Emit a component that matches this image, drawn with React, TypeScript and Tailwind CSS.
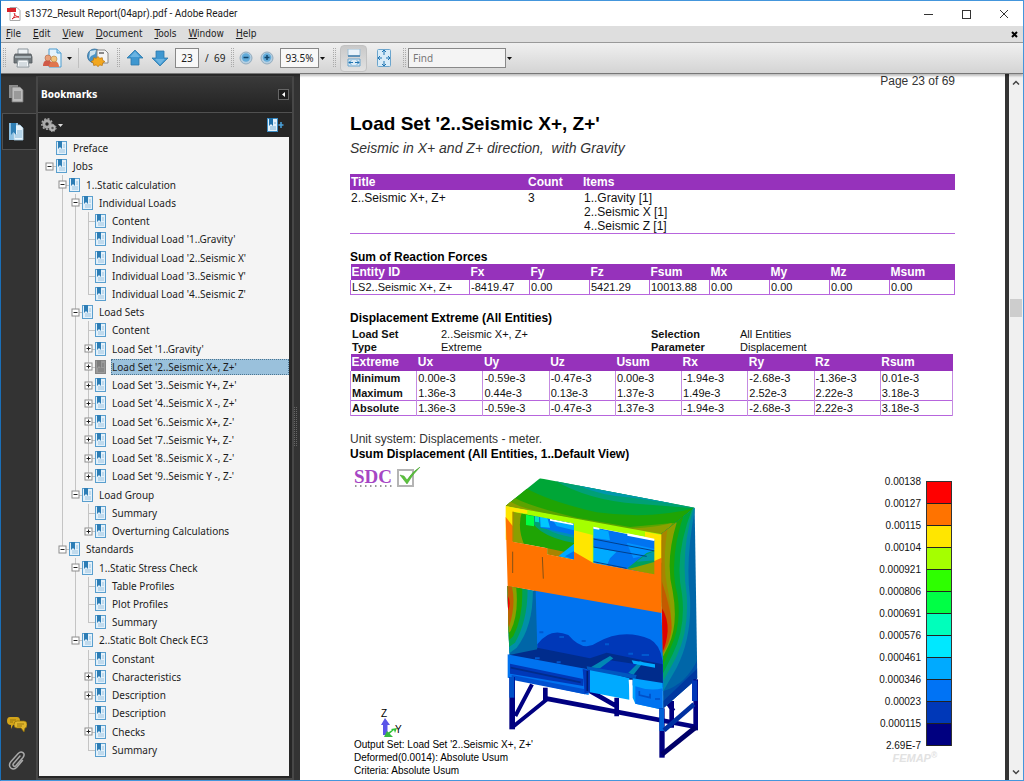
import type { ReactNode } from 'react'
import clsx from 'clsx'

type Bookmark = { level: number; label: string; toggle?: '+' | '-'; selected?: boolean }

const bookmarks: Bookmark[] = [
  { level: 0, label: 'Preface' },
  { level: 0, label: 'Jobs', toggle: '-' },
  { level: 1, label: '1..Static calculation', toggle: '-' },
  { level: 2, label: 'Individual Loads', toggle: '-' },
  { level: 3, label: 'Content' },
  { level: 3, label: "Individual Load '1..Gravity'" },
  { level: 3, label: "Individual Load '2..Seismic X'" },
  { level: 3, label: "Individual Load '3..Seismic Y'" },
  { level: 3, label: "Individual Load '4..Seismic Z'" },
  { level: 2, label: 'Load Sets', toggle: '-' },
  { level: 3, label: 'Content' },
  { level: 3, label: "Load Set '1..Gravity'", toggle: '+' },
  { level: 3, label: "Load Set '2..Seismic X+, Z+'", toggle: '+', selected: true },
  { level: 3, label: "Load Set '3..Seismic Y+, Z+'", toggle: '+' },
  { level: 3, label: "Load Set '4..Seismic X -, Z+'", toggle: '+' },
  { level: 3, label: "Load Set '6..Seismic X+, Z-'", toggle: '+' },
  { level: 3, label: "Load Set '7..Seismic Y+, Z-'", toggle: '+' },
  { level: 3, label: "Load Set '8..Seismic X -, Z-'", toggle: '+' },
  { level: 3, label: "Load Set '9..Seismic Y -, Z-'", toggle: '+' },
  { level: 2, label: 'Load Group', toggle: '-' },
  { level: 3, label: 'Summary' },
  { level: 3, label: 'Overturning Calculations', toggle: '+' },
  { level: 1, label: 'Standards', toggle: '-' },
  { level: 2, label: '1..Static Stress Check', toggle: '-' },
  { level: 3, label: 'Table Profiles' },
  { level: 3, label: 'Plot Profiles' },
  { level: 3, label: 'Summary' },
  { level: 2, label: '2..Static Bolt Check EC3', toggle: '-' },
  { level: 3, label: 'Constant' },
  { level: 3, label: 'Characteristics', toggle: '+' },
  { level: 3, label: 'Description', toggle: '+' },
  { level: 3, label: 'Description' },
  { level: 3, label: 'Checks', toggle: '+' },
  { level: 3, label: 'Summary' },
]

const menus = ['File', 'Edit', 'View', 'Document', 'Tools', 'Window', 'Help']

const forces = {
  head: ['Entity ID', 'Fx', 'Fy', 'Fz', 'Fsum', 'Mx', 'My', 'Mz', 'Msum'],
  row: ['LS2..Seismic X+, Z+', '-8419.47', '0.00', '5421.29', '10013.88', '0.00', '0.00', '0.00', '0.00'],
}

const extremes = {
  head: ['Extreme', 'Ux', 'Uy', 'Uz', 'Usum', 'Rx', 'Ry', 'Rz', 'Rsum'],
  rows: [
    ['Minimum', '0.00e-3', '-0.59e-3', '-0.47e-3', '0.00e-3', '-1.94e-3', '-2.68e-3', '-1.36e-3', '0.01e-3'],
    ['Maximum', '1.36e-3', '0.44e-3', '0.13e-3', '1.37e-3', '1.49e-3', '2.52e-3', '2.22e-3', '3.18e-3'],
    ['Absolute', '1.36e-3', '-0.59e-3', '-0.47e-3', '1.37e-3', '-1.94e-3', '-2.68e-3', '2.22e-3', '3.18e-3'],
  ],
}

const scaleLabels = [
  '0.00138', '0.00127', '0.00115', '0.00104', '0.000921', '0.000806', '0.000691',
  '0.000576', '0.000461', '0.000346', '0.00023', '0.000115', '2.69E-7',
]

const scaleColors = [
  'bg-[#ff0000]', 'bg-[#ff7300]', 'bg-[#ffe600]', 'bg-[#a5ff00]', 'bg-[#2eff00]', 'bg-[#00ff45]',
  'bg-[#00ffbb]', 'bg-[#00e8ff]', 'bg-[#00aaff]', 'bg-[#0073f5]', 'bg-[#0038b8]', 'bg-[#000080]',
]

// does the guide line in column k go on below row i?
function continues(i: number, k: number) {
  for (let j = i + 1; j < bookmarks.length; j++) {
    if (bookmarks[j].level < k) return false
    if (bookmarks[j].level === k) return true
  }
  return false
}

function BookmarkIcon({ gray }: { gray?: boolean }) {
  const c = gray ? '#7d7d7d' : '#2d7db5'
  return (
    <svg viewBox="0 0 11 14" className="relative w-[11px] h-[14px] shrink-0">
      <rect x="0.5" y="0.5" width="10" height="13" fill={gray ? '#9a9a9a' : '#e4f1fa'} stroke={gray ? '#858585' : '#5a9fce'} />
      <path d="M2 0h4v8L4 6 2 8z" fill={c} />
      <path d="M7 4h2M7 6h2M3 9h6M3 11h6" stroke={gray ? '#777' : '#9cc4e0'} />
    </svg>
  )
}

function TreeRow({ item, index }: { item: Bookmark; index: number }) {
  const cols = Array.from({ length: item.level + 1 }, (_, k) => k)
  return (
    <li className="flex-1 flex items-stretch min-h-[17px]" role="treeitem" aria-level={item.level + 1} aria-selected={!!item.selected}>
      {cols.map((k) => {
        const own = k === item.level
        const down = k > 0 && continues(index, k)
        return (
          <span key={k} className="w-[13px] flex flex-col items-center relative">
            <span className={clsx('flex-1 w-px', (down || (own && k > 0)) && 'bg-[#c4c4c4]')} />
            <span className={clsx('flex-1 w-px', down && 'bg-[#c4c4c4]')} />
            {own && (k > 0 || item.toggle) && <span className="absolute left-[6px] right-0 top-1/2 h-px bg-[#c4c4c4]" />}
            {own && item.toggle && (
              <button aria-label="Toggle" className="absolute inset-0 flex items-center justify-center">
                <svg viewBox="0 0 9 9" className="w-[9px] h-[9px]">
                  <rect x="1" y="1" width="7" height="7" fill="#fff" stroke="#8c8c8c" />
                  <path d={item.toggle === '+' ? 'M2.5 4.5h4M4.5 2.5v4' : 'M2.5 4.5h4'} stroke="#222" />
                </svg>
              </button>
            )}
          </span>
        )
      })}
      <span className="flex items-center"><BookmarkIcon gray={item.selected} /></span>
      <a
        href="#"
        className={clsx(
          'ml-[5px] my-px flex-1 flex items-center border whitespace-nowrap',
          item.selected ? 'bg-[#9ac1dc] border-dotted border-[#4d7590]' : 'border-transparent'
        )}
      >
        {item.label}
      </a>
    </li>
  )
}

function Grip() {
  return (
    <svg viewBox="0 0 3 20" className="w-[3px] h-5 shrink-0">
      <path d="M0.5 0v20M2.5 0v20" stroke="#aaa" strokeDasharray="1 1" />
    </svg>
  )
}

function Caret({ className }: { className?: string }) {
  return (
    <button aria-label="More" className={clsx('w-[7px] h-4 flex items-center', className)}>
      <svg viewBox="0 0 5 3" className="w-[5px] h-[3px]"><path d="M0 0h5L2.5 3z" fill="#111" /></svg>
    </button>
  )
}

function ToolButton({ label, className, children }: { label: string; className?: string; children: ReactNode }) {
  return (
    <button aria-label={label} className={clsx('flex items-center justify-center shrink-0', className)}>
      {children}
    </button>
  )
}

function ArrowIcon({ down }: { down?: boolean }) {
  return (
    <svg viewBox="0 0 18 18" className={clsx('w-[18px] h-[18px]', down && 'rotate-180')}>
      <path d="M9 1l8 8h-4v7H5V9H1z" fill="#3f97d0" stroke="#2d78ab" strokeWidth="0.8" strokeLinejoin="round" />
      <path d="M9 2.5l5 5.5H4z" fill="#6bb4e2" />
    </svg>
  )
}

function ZoomIcon({ plus }: { plus?: boolean }) {
  return (
    <svg viewBox="0 0 14 14" className="w-[14px] h-[14px]">
      <circle cx="7" cy="7" r="6" fill="#b5cfe2" stroke="#94acbd" />
      <circle cx="7" cy="6.5" r="4.2" fill="#62abd9" />
      <path d={plus ? 'M4.5 6.5h5M7 4v5' : 'M4.5 6.5h5'} stroke="#12456b" strokeWidth="1.5" />
    </svg>
  )
}

function Toolbar() {
  return (
    <div className="relative z-10 h-8 shrink-0 flex items-center pl-[2px] bg-linear-to-b from-[#f0f0f0] to-[#d4d4d4] border-t border-t-[#999] border-b border-b-[#777] shadow-[0_2px_2px_rgba(0,0,0,0.25)]">
      <Grip />
      <ToolButton label="Print" className="ml-[7px] w-[20px]">
        <svg viewBox="0 0 20 20" className="w-5 h-5">
          <path d="M5 1h10v6H5z" fill="#eef3f6" stroke="#8c969c" />
          <path d="M2 6h16l1 3v6H1V9z" fill="#70777b" stroke="#50575b" strokeWidth="0.8" />
          <path d="M2 8h16v2H2z" fill="#a9b3b8" />
          <path d="M5 12h10l1 7H4z" fill="#f5f8fa" stroke="#8c969c" />
          <path d="M6 15h8M6 17h8" stroke="#b5c0c7" />
        </svg>
      </ToolButton>
      <ToolButton label="Collaborate" className="ml-[10px] w-[20px]">
        <svg viewBox="0 0 20 20" className="w-5 h-5">
          <path d="M6 1h8l4 4v14H6z" fill="#e6f3fc" stroke="#4d9ccf" />
          <path d="M14 1v4h4" fill="#bfdcef" stroke="#4d9ccf" />
          <path d="M0 18c0-8 9-8 9 0z" fill="#d05a48" />
          <circle cx="5" cy="10" r="3" fill="#e8a07a" stroke="#b0623f" strokeWidth="0.6" />
          <path d="M6 19c0-8 10-8 10 0z" fill="#e0764f" />
          <circle cx="11" cy="11" r="3" fill="#f3c37c" stroke="#b0823f" strokeWidth="0.6" />
        </svg>
      </ToolButton>
      <Caret className="ml-1" />
      <div className="ml-1 w-px h-5 bg-[#c0c0c0]" />
      <ToolButton label="Online services" className="ml-2 w-[22px]">
        <svg viewBox="0 0 22 21" className="w-[22px] h-[21px]">
          <circle cx="7.5" cy="8" r="7" fill="#4a93c6" stroke="#376f98" strokeWidth="0.8" />
          <path d="M3 3l6-1-1 4-4 2-2 3z" fill="#cfe3ee" />
          <path d="M10 2h8l3 3v10H10z" fill="#f4f4f4" stroke="#888" />
          <path d="M12 5h5" stroke="#666" strokeWidth="1.5" />
          <path d="M11 8.500l1.700 1.800 2.600-.6.4 2.600 2.300 1.300-2.300 1.300-.4 2.600-2.600-.6L11 18.700l-1.700-1.800-2.600.6-.4-2.600L4 13.600l2.300-1.300.4-2.600 2.600.6z" fill="#f2a71f" stroke="#b87410" strokeWidth="0.7" />
        </svg>
      </ToolButton>
      <div className="ml-2"><Grip /></div>
      <ToolButton label="Previous page" className="ml-[6px] w-[18px]"><ArrowIcon /></ToolButton>
      <ToolButton label="Next page" className="ml-[7px] w-[18px]"><ArrowIcon down /></ToolButton>
      <input aria-label="Page" defaultValue="23" className="ml-[6px] w-6 h-5 bg-[#f8f8f8] border border-[#888] text-center outline-none" />
      <span className="ml-[6px] w-[22px] whitespace-nowrap">/ &nbsp;69</span>
      <div className="ml-1"><Grip /></div>
      <ToolButton label="Zoom out" className="ml-[5px] w-[14px]"><ZoomIcon /></ToolButton>
      <ToolButton label="Zoom in" className="ml-[7px] w-[14px]"><ZoomIcon plus /></ToolButton>
      <input aria-label="Zoom" defaultValue="93.5%" className="ml-[6px] w-[39px] h-5 bg-[#f8f8f8] border border-[#888] text-center outline-none" />
      <Caret className="ml-[1px]" />
      <div className="ml-[6px]"><Grip /></div>
      <ToolButton label="Fit width" className="ml-[4px] w-[27px] h-[27px] rounded-sm bg-linear-to-b from-[#c9c9c9] to-[#e2e2e2] border border-[#c2c2c2]">
        <svg viewBox="0 0 14 18" className="w-[14px] h-[18px]">
          <path d="M1 0h12v7H1z" fill="#e9f3fa" stroke="#9fbfd5" />
          <path d="M1 7h12" stroke="#3f7dab" strokeWidth="1.5" />
          <path d="M1 10h12v7H1z" fill="#dcecf7" stroke="#6ba5cd" />
          <path d="M2 13.5h4M8 13.5h4M4 11.5l-2 2 2 2M10 11.5l2 2-2 2" stroke="#1f74b2" fill="none" />
        </svg>
      </ToolButton>
      <ToolButton label="Fit page" className="ml-[9px] w-[16px]">
        <svg viewBox="0 0 14 18" className="w-[14px] h-[18px]">
          <rect x="0.5" y="0.5" width="13" height="17" rx="1" fill="#d9ecf8" stroke="#6ba5cd" />
          <path d="M7 1v5M7 12v5M1 9h4M9 9h4M5 3l2-2 2 2M5 15l2 2 2-2M3 7L1 9l2 2M11 7l2 2-2 2" stroke="#1f74b2" fill="none" />
        </svg>
      </ToolButton>
      <div className="ml-[11px]"><Grip /></div>
      <input aria-label="Find" placeholder="Find" className="ml-[2px] w-[98px] h-5 pl-1 bg-[#f4f4f4] border border-[#888] placeholder-[#777] outline-none" />
      <Caret className="ml-[1px]" />
    </div>
  )
}

function Sidebar() {
  return (
    <aside className="flex bg-[#333] shrink-0">
      <nav className="w-[35px] flex flex-col">
        <button aria-label="Pages" className="h-[39px] flex items-center justify-center pr-[5px]">
          <svg viewBox="0 0 16 19" className="w-4 h-[19px]">
            <path d="M1 1h9v13H1z" fill="#8d8d8d" />
            <path d="M4 3h8l3 3v12H4z" fill="#bcbcbc" stroke="#777" strokeWidth="0.8" />
            <path d="M6 8h7M6 10h7M6 12h7M6 14h7" stroke="#777" />
          </svg>
        </button>
        <button aria-label="Bookmarks" className="h-[37px] ml-px flex items-center justify-center bg-[#262626] border border-r-0 border-[#505050] pr-[7px]">
          <svg viewBox="0 0 16 19" className="w-4 h-[19px]">
            <path d="M1 1h9v17H1z" fill="#8fc1e2" />
            <path d="M6 3h6l3 3v12H6z" fill="#e8f4fc" stroke="#a6cbe2" strokeWidth="0.8" />
            <path d="M3 1h5v12l-2.500-3L3 13z" fill="#2f7fb5" />
            <path d="M9 9h5M9 11h5M7 13h7M7 15h7" stroke="#7fb2d4" />
          </svg>
        </button>
        <div className="flex-1" />
        <button aria-label="Comments" className="h-8 flex items-center justify-center pr-[4px]">
          <svg viewBox="0 0 20 15" className="w-5 h-[15px]">
            <path d="M3 0h7q3 0 3 4t-3 4H6l-2 4V8Q0 8 0 4t3-4z" fill="#d3a419" />
            <path d="M10 4h7q3 0 3 3.500T18 11l-1 4-3-4h-4q-3 0-3-3.500T10 4z" fill="#dfb52c" stroke="#8a6a08" strokeWidth="0.7" />
            <path d="M3 3h6M3 5h3M10 7h7M10 9h5" stroke="#8a6a08" strokeWidth="0.8" />
          </svg>
        </button>
        <button aria-label="Attachments" className="h-10 flex items-center justify-center pr-[4px]">
          <svg viewBox="0 0 18 20" className="w-[18px] h-5" fill="none" stroke="#a9a9a9" strokeWidth="1.5" strokeLinecap="round">
            <path d="M12 6l-6.500 7.500c-1.500 2 .8 3.800 2.300 2.200L15 7.500c3-4-1.500-7.500-4.800-4L3 11.500c-4.500 5.500 2 10 6 5.500l5.500-6.500" />
          </svg>
        </button>
      </nav>
      <section className="w-[258px] flex flex-col border-2 border-t border-[#474747] bg-[#262626] mt-[2px]">
        <header className="h-[36px] shrink-0 flex items-center justify-between pl-[3px] pr-[3px] bg-linear-to-b from-[#3a3a3a] to-[#222] border-b border-[#505050]">
          <h2 className="font-bold text-white font-['DejaVu_Sans_Condensed','DejaVu_Sans',sans-serif]">Bookmarks</h2>
          <button aria-label="Collapse" className="w-[11px] h-[11px] border border-[#666] bg-[#1e1e1e] flex items-center justify-center">
            <svg viewBox="0 0 3 5" className="w-[3px] h-[5px]"><path d="M3 0v5L0 2.500z" fill="#fff" /></svg>
          </button>
        </header>
        <div className="h-[24px] shrink-0 flex items-center justify-between pl-[3px] pr-[8px]">
          <button aria-label="Options" className="flex items-center">
            <svg viewBox="0 0 22 15" className="w-[22px] h-[15px]">
              <circle cx="6" cy="6" r="3.2" fill="none" stroke="#a8a8a8" strokeWidth="3" />
              <circle cx="6" cy="6" r="5.2" fill="none" stroke="#a8a8a8" strokeWidth="1.5" strokeDasharray="2 1.5" />
              <circle cx="11.5" cy="10" r="2.2" fill="#555" stroke="#b4b4b4" strokeWidth="2" />
              <circle cx="11.5" cy="10" r="3.6" fill="none" stroke="#b4b4b4" strokeWidth="1" strokeDasharray="1.5 1.3" />
              <path d="M17 6h5l-2.500 3z" fill="#ddd" />
            </svg>
          </button>
          <button aria-label="New bookmark">
            <svg viewBox="0 0 17 14" className="w-[17px] h-[14px]">
              <rect x="0.5" y="0.5" width="10" height="13" fill="#e4f1fa" stroke="#3b8cc4" />
              <path d="M2 0h4v8L4 6 2 8z" fill="#1d6ea8" />
              <path d="M7 5h2M3 9h6M3 11h6" stroke="#7fb2d4" />
              <path d="M14 4v6M11.500 7h5" stroke="#4aa3dd" strokeWidth="1.5" />
            </svg>
          </button>
        </div>
        <ul role="tree" className="flex-1 min-h-0 flex flex-col ml-px mr-[3px] mb-[2px] pl-1 pt-[2px] pb-[17px] bg-[#f4f4f4] overflow-hidden">
          {bookmarks.map((b, i) => <TreeRow key={i} item={b} index={i} />)}
        </ul>
      </section>
      <div className="w-[6px] flex items-center">
        {/* splitter handle */}
        <svg viewBox="0 0 3 40" className="w-[3px] h-10"><path d="M0.5 0v40M2.5 0v40" stroke="#666" strokeDasharray="1 1" /></svg>
      </div>
    </aside>
  )
}

function SdcLogo() {
  return (
    <svg viewBox="0 0 68 22" className="w-[68px] h-[22px]">
      <text x="0" y="16" fontFamily="Liberation Serif, serif" fontSize="19" fontWeight="bold" fill="#a646c4">SDC</text>
      <path d="M1 19h38" stroke="#777" strokeWidth="1.5" strokeDasharray="1.5 3.5" />
      <rect x="44" y="3" width="15" height="16" fill="#fff" stroke="#b4b4b4" strokeWidth="2" />
      <path d="M46 8l4 1 3 4q5-8 13-13-8 8-13 17z" fill="#5cc43c" stroke="#3f9a28" strokeWidth="0.5" />
    </svg>
  )
}

function Triad() {
  return (
    <svg viewBox="0 0 28 30" className="w-7 h-[30px]">
      <text x="2" y="9" fontFamily="Liberation Sans, sans-serif" fontSize="10" fill="#000">Z</text>
      <path d="M6 10l5 7H8.500v10H4V17H2z" fill="#5b55e8" />
      <path d="M8 28l7-6 1 3 2-5-6 1 1 1-6 4z" fill="#2fc437" />
      <path d="M8 23l6 6H5z" fill="#38b840" />
      <text x="16" y="25" fontFamily="Liberation Sans, sans-serif" fontSize="10" fill="#000">Y</text>
    </svg>
  )
}

// contour plot of the cabinet on its support frame
function Model() {
  return (
    <svg viewBox="0 0 660 870" className="w-[220px] h-[290px] shrink-0">
      <defs>
        <clipPath id="top"><path d="M47 105L150 22 614 110 515 192z" /></clipPath>
        <clipPath id="side"><path d="M513 190L614 110 622 622 520 712z" /></clipPath>
        <clipPath id="left"><path d="M52 345L137 360 142 535 58 552z" /></clipPath>
        <clipPath id="winL"><path d="M68 120L252 158V266L172 250V232L68 212z" /></clipPath>
        <clipPath id="winR"><path d="M308 168L495 206V312L308 276z" /></clipPath>
      </defs>

      {/* support frame, rear part */}
      <g stroke="#000080" fill="none">
        <path d="M166 650V690" strokeWidth="14" />
        <path d="M166 682L620 768" strokeWidth="14" />
        <path d="M68 768L172 684M76 735L126 640" strokeWidth="12" />
        <path d="M300 660L380 706M380 680V736M545 690V770M530 690L550 720" strokeWidth="14" />
      </g>

      {/* roof */}
      <g clipPath="url(#top)">
        <path d="M40 0H630V200H40z" fill="#00a637" />
        <path d="M192 28Q300 90 440 98L614 112V90L200 10z" fill="#00a075" />
        <path d="M255 40Q340 78 430 80L545 98V60L255 20z" fill="#0098ac" />
        <path d="M108 52Q180 92 320 124 480 146 614 112V200H40V80z" fill="#1fa404" />
        <path d="M76 82Q120 106 260 140L420 168Q500 160 590 152V200H30V90z" fill="#5ba300" />
        <path d="M62 92Q90 112 240 144L400 174Q500 170 545 156V210H30V90z" fill="#8c9f00" />
      </g>

      {/* right side panel */}
      <g clipPath="url(#side)">
        <path d="M500 100H630V720H500z" fill="#0066a8" />
        <path d="M500 100H618Q585 260 600 380 606 500 560 590L520 660H500z" fill="#0087a8" />
        <path d="M500 100H614Q570 240 590 370 598 480 558 560L520 630H500z" fill="#00a075" />
        <path d="M500 100H612Q550 250 576 370 588 470 548 550L520 605H500z" fill="#00a637" />
        <path d="M500 100H592Q532 260 562 370 577 460 540 535L520 580H500z" fill="#1fa404" />
        <path d="M500 100L560 155Q525 270 548 360 566 460 535 525L520 555H500z" fill="#8c9f00" />
        <path d="M500 160H535Q515 270 532 350 556 460 530 515L520 535H500z" fill="#a88400" />
        <path d="M515 330Q545 420 545 470 542 510 520 545H500V330z" fill="#c45a00" />
        <path d="M515 410Q534 440 533 480 530 520 516 545z" fill="#e00000" />
        <path d="M520 660Q590 640 625 560V720H520z" fill="#0050a8" />
        <path d="M520 690L625 590V720H520z" fill="#0038a0" />
      </g>

      {/* interior below the panel */}
      <path d="M130 350L515 420 520 650 140 560z" fill="#0073f0" />
      <path d="M142 520Q180 468 235 492 280 545 320 515 400 470 480 505 510 520 518 570V660L142 590z" fill="#0038b8" />
      <path d="M58 550L142 530 300 562 350 545 518 580V640L300 615 58 560z" fill="#002c8c" />
      <path d="M340 565L440 580 420 615 300 600z" fill="#0038b8" />
      <path d="M300 590L360 555 370 562 330 592zM415 605L450 570 460 574 430 612z" fill="#0087b4" />
      <path d="M425 568L495 580 495 590 430 578z" fill="#00aaff" />
      <path d="M148 484h12M208 498h14M275 510h12M345 520h12M415 548h14M455 552h22M135 562h14M200 574h12" stroke="#0058d0" strokeWidth="6" />
      <g clipPath="url(#left)">
        <path d="M40 330H150V560H40z" fill="#0066a8" />
        <path d="M40 330H128Q135 460 80 530L40 560z" fill="#0090a8" />
        <path d="M40 330H112Q118 440 75 515L40 540z" fill="#00a05a" />
        <path d="M40 330H95Q104 430 70 495L40 525z" fill="#1fa404" />
        <path d="M40 330H76Q90 420 62 480L40 500z" fill="#8c9f00" />
        <path d="M40 330L66 348Q78 400 58 465L40 480z" fill="#c06000" />
        <path d="M52 372Q66 396 52 424z" fill="#f00000" />
      </g>

      {/* openings */}
      <g clipPath="url(#winL)">
        <path d="M60 110H260V270H60z" fill="#1fa404" />
        <path d="M60 110L96 122Q80 170 104 225H60z" fill="#8c9f00" />
        <path d="M120 125Q120 190 252 216V120z" fill="#00a075" />
        <path d="M135 130Q150 185 252 200V130z" fill="#0090b4" />
        <path d="M148 138L252 158V192L152 170z" fill="#0073f0" />
        <path d="M150 136L172 140 180 170 152 168z" fill="#00c8ff" />
        <path d="M190 150L252 160V178L200 165z" fill="#00aaff" />
        <path d="M108 131L132 136V166L108 162z" fill="#00ff45" />
        <path d="M135 135L147 138V154L135 152z" fill="#00e0c8" />
        <path d="M180 139L250 154V163L180 149z" fill="#fff" />
        <path d="M172 232L252 248V266L172 252z" fill="#a88400" />
        <path d="M205 256L252 218V266z" fill="#00aaff" />
        <path d="M225 256L252 240V266z" fill="#0073f0" />
      </g>
      <g clipPath="url(#winR)">
        <path d="M300 160H500V320H300z" fill="#0073f0" />
        <path d="M308 172L355 180 360 208 308 200z" fill="#00aaff" />
        <path d="M308 228L380 242 360 262 350 285 308 275z" fill="#00aaff" />
        <path d="M410 215L495 234V246L430 262z" fill="#0092ff" />
        <path d="M412 292L470 246 495 238V312z" fill="#00a05a" />
        <path d="M430 290L495 272V312L412 294z" fill="#8c9f00" />
        <path d="M470 250L495 240V268L440 272z" fill="#0098ac" />
        <path d="M310 204L495 240M310 228L470 256M310 272L410 292" stroke="#00408c" strokeWidth="3" />
      </g>

      {/* front frame */}
      <path d="M47 105L515 190V208L68 122z" fill="#a5ff00" />
      <path d="M47 105L112 118V128L70 122V212L47 206z" fill="#ffe600" />
      <path d="M252 152L310 164V278L252 262z" fill="#a5ff00" />
      <path d="M252 178L308 192V278L252 262z" fill="#ffe600" />
      <path d="M465 182L515 192V275L493 270V206L465 198z" fill="#ffe600" />
      <path d="M310 167L328 171V176L310 173zM412 187L493 203V210L412 194z" fill="#fff" />
      <path d="M47 138L68 165V212L172 232V250L252 266V242L310 276 493 310V270L515 260V426L53 345z" fill="#ff7300" />
      <path d="M68 242V306M157 258L160 323" stroke="#6b4a1c" strokeWidth="2.5" />
      <path d="M69 122V212" stroke="#8c6c00" strokeWidth="3" />
      <path d="M515 190V420" stroke="#b07000" strokeWidth="2" />

      {/* drawers */}
      <path d="M53 550L290 594 300 610 296 672 285 670 53 620z" fill="#0073f0" />
      <path d="M60 578L280 624V645L60 608z" fill="#0038b8" />
      <path d="M62 590L272 634" stroke="#002c8c" strokeWidth="5" />
      <path d="M65 612L285 655V670L65 626z" fill="#0050d0" />
      <path d="M278 594L300 598V664L284 668z" fill="#0038b8" />
      <path d="M292 600V660" stroke="#001c70" strokeWidth="5" />
      <path d="M300 590L418 622V686L300 664z" fill="#00aaff" />
      <path d="M290 586L440 612 436 624 292 596z" fill="#0058c0" />
      <path d="M416 626H428V688L420 692z" fill="#fff" />
      <path d="M428 622L518 636V716L436 698 428 680z" fill="#00a2ff" />
      <path d="M436 646Q480 662 518 652V716L436 698z" fill="#0073f0" />
      <path d="M448 660V672L480 680V668M495 684H510" stroke="#0050c8" strokeWidth="5" fill="none" />

      {/* support frame, front part */}
      <path d="M58 618H75V775H58z" fill="#000080" />
      <path d="M58 618H73V680H58z" fill="#0050c8" />
      <path d="M508 712H524V860H508z" fill="#000080" />
      <path d="M508 712H522V780H508z" fill="#0062d8" />
      <path d="M610 625H624V778H610z" fill="#000080" />
      <path d="M606 628H622V690H606z" fill="#0038b8" />
      <path d="M522 778L612 700" stroke="#0030a0" strokeWidth="14" />
      <path d="M516 850L618 768" stroke="#000068" strokeWidth="15" />
    </svg>
  )
}

function Legend() {
  return (
    <div className="flex gap-[5px]">
      <div className="flex flex-col items-end text-[10px] leading-[22px]">
        {scaleLabels.map((l) => <span key={l} className="h-[22px]">{l}</span>)}
        <span className="-mt-[6px] -mr-4 text-[11px] leading-[14px] font-bold italic text-[#e2e2e2]">FEMAP<sup>®</sup></span>
      </div>
      <div className="mt-[10px] w-[26px] h-[265px] border border-b-0 border-[#333]">
        {scaleColors.map((c) => <div key={c} className={clsx('h-[22px] border-b border-[#222]', c)} />)}
      </div>
    </div>
  )
}

function ReportPage() {
  return (
    <article className="px-[50px] text-xs leading-[13px] text-[#111]">
      <p className="text-right leading-[14px] text-[#333]">Page 23 of 69</p>
      <h1 className="mt-6 text-[19px] leading-6 font-bold text-black">Load Set '2..Seismic X+, Z+'</h1>
      <p className="mt-[2px] text-sm leading-5 italic text-[#333]">Seismic in X+ and Z+ direction, &nbsp;with Gravity</p>

      <table className="mt-4 w-full table-fixed text-left">
        <thead className="bg-[#9632bb] text-white leading-4">
          <tr>
            <th className="w-[178px] p-0 pl-px">Title</th>
            <th className="w-[55px] p-0">Count</th>
            <th className="p-0">Items</th>
          </tr>
        </thead>
        <tbody className="align-top leading-[14px]">
          <tr className="border-b border-[#b765dd]">
            <td className="p-0 pl-px pt-px">2..Seismic X+, Z+</td>
            <td className="p-0 pt-px">3</td>
            <td className="p-0 pt-px pl-px">1..Gravity [1]<br />2..Seismic X [1]<br />4..Seismic Z [1]</td>
          </tr>
        </tbody>
      </table>

      <h2 className="mt-[17px] font-bold text-black">Sum of Reaction Forces</h2>
      <table className="w-full table-fixed text-left">
        <thead className="bg-[#9632bb] text-white leading-4">
          <tr>
            {forces.head.map((h, i) => (
              <th key={h} className={clsx('p-0 pl-px', i === 0 ? 'w-[119px]' : i < 8 ? 'w-[60px]' : '')}>{h}</th>
            ))}
          </tr>
        </thead>
        <tbody className="text-[11px] leading-[14px]">
          <tr>
            {forces.row.map((v, i) => <td key={i} className="p-0 pl-px border border-t-0 border-[#b765dd] whitespace-nowrap">{v}</td>)}
          </tr>
        </tbody>
      </table>

      <h2 className="mt-[17px] font-bold text-black">Displacement Extreme (All Entities)</h2>
      <dl className="mt-[3px] pl-[2px] grid grid-cols-[89px_210px_89px_1fr] text-[11px]">
        <dt className="font-bold">Load Set</dt><dd>2..Seismic X+, Z+</dd>
        <dt className="font-bold">Selection</dt><dd>All Entities</dd>
        <dt className="font-bold">Type</dt><dd>Extreme</dd>
        <dt className="font-bold">Parameter</dt><dd>Displacement</dd>
      </dl>
      <div className="pr-[2px]">
        <table className="w-full table-fixed text-left">
          <thead className="bg-[#9632bb] text-white leading-[17px]">
            <tr>
              {extremes.head.map((h, i) => <th key={h} className={clsx('p-0 pl-px', i < 8 && 'w-[11%]')}>{h}</th>)}
            </tr>
          </thead>
          <tbody className="text-[11px] leading-[14px]">
            {extremes.rows.map((r) => (
              <tr key={r[0]} className={clsx('border-b border-[#b765dd]', r[0] === 'Minimum' && 'border-b-transparent')}>
                {r.map((v, i) => (
                  <td key={i} className={clsx('p-0 pl-px border-x border-[#c58be2]', i === 0 && 'font-bold')}>{v}</td>
                ))}
              </tr>
            ))}
          </tbody>
        </table>
      </div>

      <p className="mt-4 leading-[15px] text-[#333]">Unit system: Displacements - meter.</p>
      <h2 className="leading-[15px] font-bold text-black">Usum Displacement (All Entities, 1..Default View)</h2>

      <figure className="flex items-start pl-1 pt-[5px] pr-[3px]">
        <div className="w-[136px] h-[310px] flex flex-col items-start whitespace-nowrap">
          <SdcLogo />
          <div className="flex-1" />
          <div className="ml-[25px]"><Triad /></div>
          <figcaption className="relative text-[10px] leading-[13px] text-black">
            Output Set: Load Set '2..Seismic X+, Z+'<br />
            Deformed(0.0014): Absolute Usum<br />
            Criteria: Absolute Usum
          </figcaption>
        </div>
        <div className="mt-1"><Model /></div>
        <div className="flex-1" />
        <div className="mt-1"><Legend /></div>
      </figure>
    </article>
  )
}

function ScrollBar() {
  return (
    <div className="w-[14px] shrink-0 bg-[#f0f0f0] flex flex-col items-center">
      <button aria-label="Scroll up" className="h-4 flex items-center">
        <svg viewBox="0 0 8 5" className="w-2 h-[5px]"><path d="M1 4.500l3-3 3 3" fill="none" stroke="#444" strokeWidth="1.5" /></svg>
      </button>
      <div className="flex-1 w-full flex flex-col px-px">
        <div className="h-[31%]" />
        <div className="h-[18px] bg-[#cdcdcd]" />
      </div>
      <button aria-label="Scroll down" className="h-4 flex items-center">
        <svg viewBox="0 0 8 5" className="w-2 h-[5px]"><path d="M1 .5l3 3 3-3" fill="none" stroke="#444" strokeWidth="1.5" /></svg>
      </button>
    </div>
  )
}

export default function App() {
  return (
    <div className="h-screen flex flex-col border border-[#4496dc] border-l-[#1a6fb8] bg-white text-[10px] leading-[14px] text-[#1c1c1c] font-['Noto_Sans',sans-serif] overflow-hidden">
      {/* TITLE BAR */}
      <header className="h-[25px] shrink-0 flex items-center pl-[6px]">
        <svg viewBox="0 0 14 14" className="w-[14px] h-[14px]">
          <path d="M3 .5h7l3 3v10H3z" fill="#fff" stroke="#aaa" />
          <path d="M0 1h9v4H0z" fill="#d8232a" />
          <path d="M5 12c3-2 3-6 2.500-6S7 9 12 10c-3-.5-5 .5-7 2z" fill="none" stroke="#d8232a" />
        </svg>
        <span className="ml-[4px] text-[10px] font-['Roboto',sans-serif]">s1372_Result Report(04apr).pdf - Adobe Reader</span>
        <div className="ml-auto flex items-center gap-[28px] pr-[14px]">
          <button aria-label="Minimize"><svg viewBox="0 0 10 10" className="w-[10px] h-[10px]"><path d="M1 5.500h9" stroke="#333" /></svg></button>
          <button aria-label="Maximize"><svg viewBox="0 0 10 10" className="w-[10px] h-[10px]"><rect x="1.5" y="1.5" width="8" height="8" fill="none" stroke="#333" /></svg></button>
          <button aria-label="Close"><svg viewBox="0 0 10 10" className="w-[10px] h-[10px]"><path d="M1 1l8 8M9 1L1 9" stroke="#333" /></svg></button>
        </div>
      </header>

      {/* MENU BAR */}
      <nav className="h-4 shrink-0 flex items-center gap-3 pl-[5px] pr-[5px] bg-[#dedede] font-['DejaVu_Sans_Condensed','DejaVu_Sans',sans-serif]">
        {menus.map((m) => (
          <button key={m}><span className="underline">{m[0]}</span>{m.slice(1)}</button>
        ))}
        <button aria-label="Close document" className="ml-auto">
          <svg viewBox="0 0 7 7" className="w-[7px] h-[7px]"><path d="M1 1l5 5M6 1L1 6" stroke="#000" strokeWidth="2" /></svg>
        </button>
      </nav>

      <Toolbar />

      <div className="flex-1 min-h-0 flex">
        <Sidebar />
        <main className="flex-1 min-w-0 overflow-hidden bg-white font-['Liberation_Sans',Arial,sans-serif]">
          <ReportPage />
        </main>
        <div className="w-1 shrink-0 bg-[#333]" />
        <ScrollBar />
      </div>
    </div>
  )
}
